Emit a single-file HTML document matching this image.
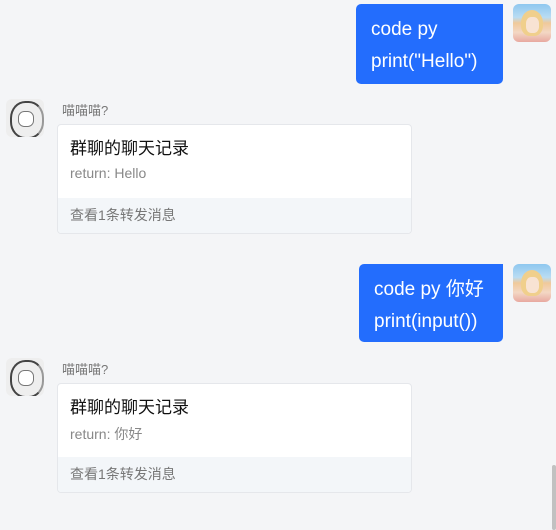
<!DOCTYPE html>
<html><head><meta charset="utf-8"><style>
*{margin:0;padding:0;box-sizing:border-box}
body{width:556px;height:530px;background:#f4f5f7;font-family:"Liberation Sans","Noto Sans CJK SC",sans-serif;position:relative;overflow:hidden}
.bub{position:absolute;background:#236dfd;color:#fff;font-size:19px;line-height:32px;border-radius:5px;border-top-right-radius:0;padding:10px 16px 8px 15px}
.av{position:absolute;width:38px;height:38px;border-radius:6px;overflow:hidden}
.girl{background:linear-gradient(180deg,#8ec7ef 0%,#b9dcf3 35%,#f0c99a 50%,#f3d7c4 75%,#e8a9a0 100%)}
.girl:before{content:"";position:absolute;left:8px;top:6px;width:22px;height:26px;border-radius:50% 50% 40% 40%;background:#f0cf8c}
.girl:after{content:"";position:absolute;left:13px;top:13px;width:13px;height:16px;border-radius:40%;background:#f8e3d3}
.manga{background:#eee}
.manga:before{content:"";position:absolute;left:4px;top:2px;width:30px;height:34px;border-radius:45%;border:2px solid #444;border-right-color:#999}
.manga:after{content:"";position:absolute;left:12px;top:12px;width:14px;height:14px;background:#fff;border:1px solid #777;border-radius:40%}
.name{position:absolute;left:62px;font-size:13px;color:#777}
.card{position:absolute;left:57px;width:355px;height:110px;background:#fff;border:1px solid #e5e7eb;border-radius:4px;overflow:hidden}
.t{position:absolute;left:12px;top:9px;font-size:17px;color:#111}
.r{position:absolute;left:12px;top:40px;font-size:14px;color:#888}
.f{position:absolute;left:0;right:0;bottom:0;height:35px;background:#f3f6f9;font-size:14px;color:#777;padding:7px 12px}
.sb{position:absolute;left:552px;top:465px;width:4px;height:65px;background:#c1c1c1;border-radius:2px}
</style></head><body>
<div class="bub" style="left:356px;top:4px;width:147px;height:80px">code py<br>print("Hello")</div>
<div class="av girl" style="left:513px;top:4px"></div>
<div class="av manga" style="left:6px;top:99px"></div>
<div class="name" style="top:100px">喵喵喵?</div>
<div class="card" style="top:124px"><div class="t">群聊的聊天记录</div><div class="r">return: Hello</div><div class="f">查看1条转发消息</div></div>

<div class="bub" style="left:359px;top:264px;width:144px;height:78px;padding-left:15px">code py 你好<br>print(input())</div>
<div class="av girl" style="left:513px;top:264px"></div>
<div class="av manga" style="left:6px;top:358px"></div>
<div class="name" style="top:359px">喵喵喵?</div>
<div class="card" style="top:383px"><div class="t">群聊的聊天记录</div><div class="r">return: 你好</div><div class="f">查看1条转发消息</div></div>
<div class="sb"></div>
</body></html>
